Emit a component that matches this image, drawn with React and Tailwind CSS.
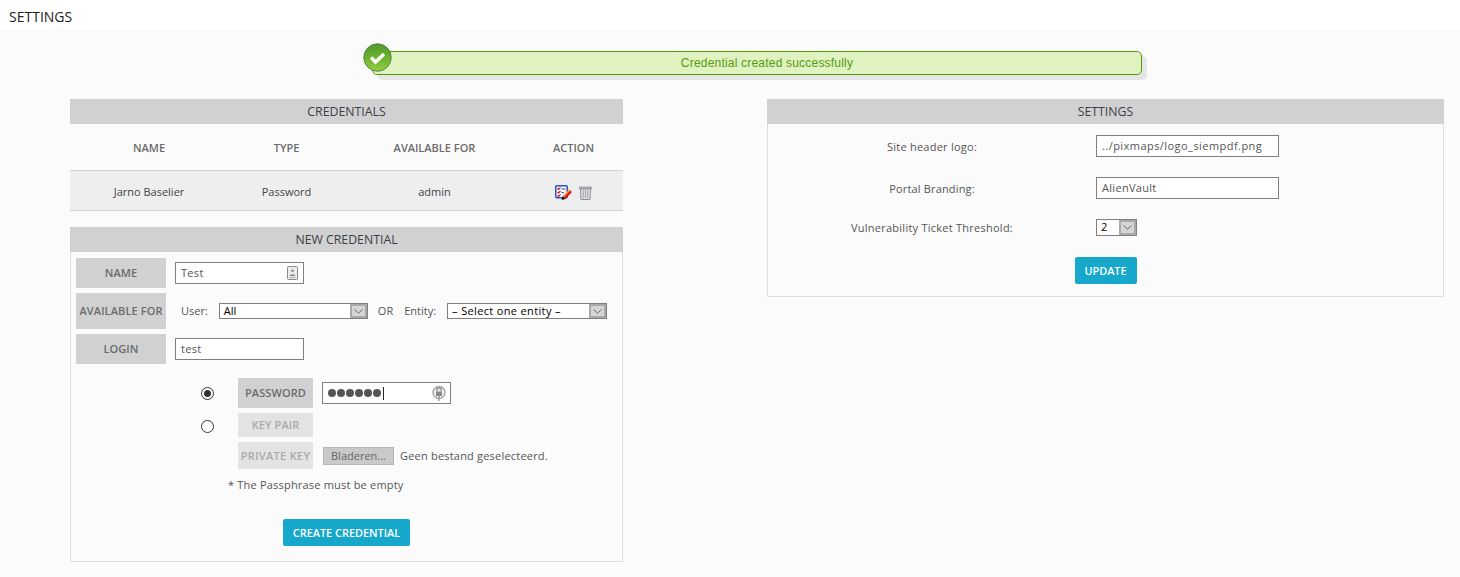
import React from 'react';

const font = { fontFamily: '"Open Sans", "Noto Sans", sans-serif' };

const Chevron = () => (
  <svg width="9" height="5" viewBox="0 0 9 5" fill="none">
    <path d="M0.5 0.5 L4.5 4.2 L8.5 0.5" stroke="#666" strokeWidth="1" />
  </svg>
);

const SelectBox = ({ value, className, textClass = '' }) => (
  <div className={`flex h-[16px] items-stretch border border-[#808080] bg-white ${className}`}>
    <span className={`flex-1 pl-[4px] text-[11px] leading-[14px] text-black ${textClass}`}>{value}</span>
    <span className="flex w-[17px] items-center justify-center border-2 border-[#a9a9a9] bg-[#d6d6d6]">
      <Chevron />
    </span>
  </div>
);

const Label = ({ children, className = '' }) => (
  <div className={`flex items-center justify-center pt-px text-[11px] font-[550] tracking-[0.1px] text-[#6b6b6b] ${className}`}>{children}</div>
);

const TextInput = ({ value, className = 'w-[129px]', textClass = '', children }) => (
  <div className={`flex h-[22px] items-center justify-between border border-[#808080] bg-white px-[5px] text-[11px] text-[#555] ${className}`}>
    <span className={textClass}>{value}</span>
    {children}
  </div>
);

const PanelHeader = ({ children }) => (
  <div className="flex h-[25px] items-center justify-center bg-[#d1d1d1] pt-px text-[12.3px] text-[#3d3d48]">{children}</div>
);

const Radio = ({ checked, className = '' }) => (
  <span className={`flex h-[13px] w-[13px] items-center justify-center rounded-full border border-[#333] bg-white ${className}`}>
    {checked && <span className="h-[7px] w-[7px] rounded-full bg-[#333]" />}
  </span>
);

const Button = ({ children, className = '' }) => (
  <button className={`h-[27px] rounded-[2px] bg-[#15a8cb] pt-[2px] text-[10.9px] font-semibold text-white ${className}`}>{children}</button>
);

const EditIcon = () => (
  <svg width="17" height="15" viewBox="0 0 17 15">
    <rect x="0.75" y="0.75" width="11.5" height="12" rx="1" fill="#f4f6ff" stroke="#2f55b4" strokeWidth="1.5" />
    <path d="M2.5 3.5l1 1 2-2.2M2.5 7l1 1 2-2.2M2.5 10.5l1 1 2-2.2" stroke="#d01c28" strokeWidth="1.2" fill="none" />
    <path d="M6.5 4h4M6.5 7.5h2.5" stroke="#2f55b4" />
    <path d="M7.5 11.5 L14 4.5 L17 7 L10.5 14 Z" fill="#e4141e" />
    <path d="M7.5 11.5 L10.5 14 L6.5 15 Z" fill="#111" />
    <path d="M8 11 L14 4.5 L15 5.4 L9 12 Z" fill="#f5c22e" />
  </svg>
);

const TrashIcon = () => (
  <svg width="13" height="15" viewBox="0 0 13 15">
    <path d="M0.5 2 H12.5 V4 H0.5 Z" fill="#b9bcc0" stroke="#8c8f93" strokeWidth="0.7" />
    <path d="M1.5 4 H11.5 L11 14.5 H2 Z" fill="#dfe1e3" stroke="#8c8f93" />
    <path d="M4.3 5.5 V13 M6.5 5.5 V13 M8.7 5.5 V13" stroke="#a2a5a8" />
  </svg>
);

const AutofillIcon = () => (
  <svg width="11" height="14" viewBox="0 0 11 14">
    <rect x="0.5" y="0.5" width="10" height="13" rx="1" fill="#ececec" stroke="#8a8a8a" />
    <circle cx="5.5" cy="4.8" r="1.3" fill="#8a8a8a" />
    <path d="M2.5 10 C3 7.5 8 7.5 8.5 10 Z" fill="#8a8a8a" />
    <path d="M2.5 11.5 H8.5" stroke="#aaa" />
  </svg>
);

const KeyIcon = () => (
  <svg width="14" height="17" viewBox="0 0 14 17">
    <circle cx="7" cy="7.5" r="6" fill="#eee" stroke="#a5a5a5" strokeWidth="1.4" />
    <path d="M4.8 6.5 V5 a2.2 2.2 0 0 1 4.4 0 V6.5" fill="none" stroke="#8a8a8a" strokeWidth="1.2" />
    <rect x="4" y="6.5" width="6" height="4.5" fill="#8a8a8a" />
    <path d="M7 11 V16" stroke="#999" strokeWidth="1.4" />
  </svg>
);

const CheckBadge = () => (
  <svg width="29" height="29" viewBox="0 0 29 29" className="absolute -left-[10px] -top-[9px]">
    <defs>
      <linearGradient id="badge" x1="0" y1="0" x2="0" y2="1">
        <stop offset="0" stopColor="#4f9a2c" />
        <stop offset="0.55" stopColor="#6cb52f" />
        <stop offset="1" stopColor="#96d043" />
      </linearGradient>
    </defs>
    <circle cx="14.5" cy="14.5" r="13.7" fill="url(#badge)" stroke="#5a7f45" strokeWidth="1" />
    <path d="M8 14.5 L12.5 19 L21 11" fill="none" stroke="#fff" strokeWidth="3.6" />
  </svg>
);

const credentialColumns = 'grid grid-cols-[158px_117px_179px_99px]';

export default function App() {
  return (
    <div className="min-h-[577px] bg-[#fbfbfb] text-[#555]" style={font}>
      {/* Page title */}
      <div className="h-[30px] bg-white pl-[9px] pt-[8px] text-[14px] leading-[17px] text-[#222]">SETTINGS</div>

      {/* Success message */}
      <div className="flex justify-center pt-[21px] pl-[54px]">
        <div className="relative flex h-[24px] w-[770px] items-center justify-center rounded-b-[5px] rounded-tr-[5px] border border-[#4f9a06] bg-[#dff2bf] pl-[20px] text-[12px] tracking-[0.2px] text-[#579a12] shadow-[5px_5px_0_#e6e6e6]" style={{ fontFamily: '"Liberation Sans", sans-serif' }}>
          <CheckBadge />
          Credential created successfully
        </div>
      </div>

      <div className="flex items-start justify-between pl-[70px] pr-[16px] pt-[24px]">
        {/* Left column */}
        <div className="w-[553px]">
          <PanelHeader>CREDENTIALS</PanelHeader>
          <div className={`${credentialColumns} h-[46px] items-center pt-[2px] text-center text-[11px] font-semibold text-[#6b6b6b]`}>
            <span>NAME</span>
            <span>TYPE</span>
            <span>AVAILABLE FOR</span>
            <span>ACTION</span>
          </div>
          <div className={`${credentialColumns} h-[41px] items-center border-t border-b border-[#d4d4d4] bg-[#eeeeee] pt-[3px] text-center text-[11px] text-[#444]`}>
            <span>Jarno Baselier</span>
            <span>Password</span>
            <span>admin</span>
            <span className="flex items-center justify-center gap-[7px]">
              <EditIcon />
              <TrashIcon />
            </span>
          </div>

          <div className="mt-[16px] h-[335px] border border-t-0 border-[#dedede]">
            <div className="-mx-px">
              <PanelHeader>NEW CREDENTIAL</PanelHeader>
            </div>
            <div className="flex flex-col gap-[5px] px-[5px] pt-[6px]">
              <div className="flex items-center gap-[9px]">
                <Label className="h-[30px] w-[90px] bg-[#d1d1d1]">NAME</Label>
                <TextInput value="Test" textClass="tracking-[0.3px]"><AutofillIcon /></TextInput>
              </div>
              <div className="flex items-center gap-[15px]">
                <Label className="h-[36px] w-[90px] bg-[#d1d1d1]">AVAILABLE FOR</Label>
                <span className="text-[11px]">User:</span>
                <div className="flex items-center text-[11px]">
                  <SelectBox value="All" className="-ml-[4px] w-[149px]" />
                  <span className="ml-[10px]">OR</span>
                  <span className="ml-[11px]">Entity:</span>
                  <SelectBox value="– Select one entity –" className="ml-[11px] w-[160px]" textClass="tracking-[0.35px]" />
                </div>
              </div>
              <div className="flex items-center gap-[9px]">
                <Label className="h-[30px] w-[90px] bg-[#d1d1d1]">LOGIN</Label>
                <TextInput value="test" textClass="tracking-[0.3px]" />
              </div>
            </div>

            <div className="mt-[14px] flex flex-col gap-[5px] pl-[130px]">
              <div className="flex items-center">
                <Radio checked />
                <Label className="ml-[24px] h-[30px] w-[75px] bg-[#d1d1d1]">PASSWORD</Label>
                <div className="ml-[9px] flex h-[22px] w-[129px] items-center justify-between border border-[#808080] bg-white pl-[5px] pr-[4px]">
                  <span className="flex items-center gap-[1px]">
                    {[0, 1, 2, 3, 4, 5].map((i) => (
                      <span key={i} className="h-[8px] w-[8px] rounded-full bg-[#555]" />
                    ))}
                    <span className="ml-px h-[13px] w-px bg-[#222]" />
                  </span>
                  <KeyIcon />
                </div>
              </div>
              <div className="flex items-center">
                <Radio className="mt-[2px]" />
                <Label className="ml-[24px] h-[24px] w-[75px] bg-[#e3e3e3] !text-[#aaa]">KEY PAIR</Label>
              </div>
              <div className="flex items-center pl-[37px]">
                <Label className="h-[27px] w-[75px] bg-[#e3e3e3] tracking-[0.3px] !text-[#aaa]">PRIVATE KEY</Label>
                <span className="ml-[10px] flex h-[18px] w-[71px] items-center justify-center border border-[#b5b5b5] bg-[#c9c9c9] pt-px text-[11px] text-[#666]">Bladeren...</span>
                <span className="ml-[6px] pt-px text-[11px] tracking-[0.2px]">Geen bestand geselecteerd.</span>
              </div>
            </div>

            <p className="mt-[8px] pl-[157px] text-[11px] leading-[16px] tracking-[0.2px]">* The Passphrase must be empty</p>

            <div className="mt-[26px] flex justify-center">
              <Button className="w-[127px]">CREATE CREDENTIAL</Button>
            </div>
          </div>
        </div>

        {/* Right column */}
        <div className="h-[198px] w-[677px] border border-t-0 border-[#dedede]">
          <div className="-mx-px">
            <PanelHeader>SETTINGS</PanelHeader>
          </div>
          <div className="flex flex-col pt-[11px]">
            <div className="flex h-[22px] items-center">
              <span className="w-[328px] pt-[2px] text-center text-[11px] tracking-[0.25px]">Site header logo:</span>
              <TextInput value="../pixmaps/logo_siempdf.png" className="w-[183px]" textClass="tracking-[0.45px]" />
            </div>
            <div className="mt-[20px] flex h-[22px] items-center">
              <span className="w-[328px] pt-[2px] text-center text-[11px] tracking-[0.15px]">Portal Branding:</span>
              <TextInput value="AlienVault" className="w-[183px] pt-px" textClass="tracking-[0.3px]" />
            </div>
            <div className="mt-[20px] flex h-[17px] items-center">
              <span className="w-[328px] pt-[2px] text-center text-[11px] tracking-[0.25px]">Vulnerability Ticket Threshold:</span>
              <SelectBox value="2" className="w-[41px] !h-[17px]" />
            </div>
            <div className="mt-[21px] flex justify-center">
              <Button className="w-[62px]">UPDATE</Button>
            </div>
          </div>
        </div>
      </div>
    </div>
  );
}
